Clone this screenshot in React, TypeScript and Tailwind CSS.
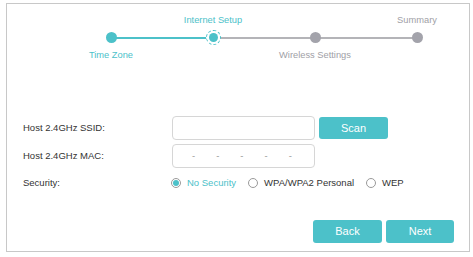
const TEAL = "#4cc1c9";

const steps = [
  { label: "Time Zone", pos: "bottom", state: "done" },
  { label: "Internet Setup", pos: "top", state: "current" },
  { label: "Wireless Settings", pos: "bottom", state: "todo" },
  { label: "Summary", pos: "top", state: "todo" },
] as const;

const Dot = ({ state }: { state: "done" | "current" | "todo" }) => {
  if (state === "current") {
    return (
      <div className="w-[15px] h-[15px] rounded-full border border-dashed border-[#4cc1c9] flex items-center justify-center bg-white">
        <div className="w-[9px] h-[9px] rounded-full bg-[#4cc1c9]" />
      </div>
    );
  }
  return (
    <div
      className={`w-[11px] h-[11px] rounded-full ${state === "done" ? "bg-[#4cc1c9]" : "bg-[#a3a3ab]"}`}
    />
  );
};

const Stepper = () => {
  return (
    <div className="relative flex ml-[53px] mt-[9px]">
      <div className="absolute left-[51px] top-[24px] w-[102px] h-[2px] bg-[#4cc1c9]" />
      <div className="absolute left-[153px] top-[24px] w-[204px] h-[2px] bg-[#b4b4b8]" />
      {steps.map((s) => (
        <div key={s.label} className="relative w-[102px] flex flex-col items-center">
          <div
            className={`h-[14px] leading-[14px] text-[9.3px] whitespace-nowrap ${s.state === "todo" ? "text-[#a0a0a6]" : "text-[#4cc1c9]"}`}
          >
            {s.pos === "top" ? s.label : ""}
          </div>
          <div className="h-[21px] flex items-center justify-center">
            <Dot state={s.state} />
          </div>
          <div
            className={`h-[14px] leading-[14px] text-[9.3px] whitespace-nowrap ${s.state === "todo" ? "text-[#a0a0a6]" : "text-[#4cc1c9]"}`}
          >
            {s.pos === "bottom" ? s.label : ""}
          </div>
        </div>
      ))}
    </div>
  );
};

const Radio = ({ checked, label }: { checked?: boolean; label: string }) => (
  <div className="flex items-center gap-[6px]">
    <div className="w-[10px] h-[10px] rounded-full border border-[#9a9a9a] flex items-center justify-center bg-white">
      {checked && <div className="w-[6px] h-[6px] rounded-full bg-[#4cc1c9]" />}
    </div>
    <span className={checked ? "text-[#4cc1c9]" : "text-[#333]"}>{label}</span>
  </div>
);

export default function App() {
  return (
    <div
      className="w-[473px] h-[257px] bg-white pt-[3px] pl-[6px]"
      style={{ fontFamily: '"Liberation Sans", Arial, sans-serif' }}
    >
      <div className="w-[464px] h-[249px] border border-[#c8c8c8] flex flex-col">
        <Stepper />
        <div className="mt-[54px] flex flex-col text-[9.5px] text-[#333]">
          <div className="flex items-center h-[24px]">
            <div className="w-[165px] pl-[16px]">Host 2.4GHz SSID:</div>
            <div className="w-[143px] h-[24px] border border-[#d6d6d6] rounded-[4px]" />
            <button
              className="ml-[4px] w-[69px] h-[22px] rounded-[3px] text-white text-[11px]"
              style={{ backgroundColor: TEAL }}
            >
              Scan
            </button>
          </div>
          <div className="flex items-center h-[24px] mt-[4px]">
            <div className="w-[165px] pl-[16px]">Host 2.4GHz MAC:</div>
            <div className="w-[143px] h-[24px] border border-[#d6d6d6] rounded-[4px] flex items-center pl-[19px] gap-[21px] text-[#999]">
              <span>-</span>
              <span>-</span>
              <span>-</span>
              <span>-</span>
              <span>-</span>
            </div>
          </div>
          <div className="flex items-center h-[16px] mt-[7px]">
            <div className="w-[164px] pl-[16px]">Security:</div>
            <div className="flex items-center gap-[12px]">
              <Radio checked label="No Security" />
              <Radio label="WPA/WPA2 Personal" />
              <Radio label="WEP" />
            </div>
          </div>
        </div>
        <div className="mt-auto mb-[8px] mr-[15px] flex justify-end gap-[4px]">
          <button
            className="w-[69px] h-[23px] rounded-[3px] text-white text-[11px]"
            style={{ backgroundColor: TEAL }}
          >
            Back
          </button>
          <button
            className="w-[68px] h-[23px] rounded-[3px] text-white text-[11px]"
            style={{ backgroundColor: TEAL }}
          >
            Next
          </button>
        </div>
      </div>
    </div>
  );
}
